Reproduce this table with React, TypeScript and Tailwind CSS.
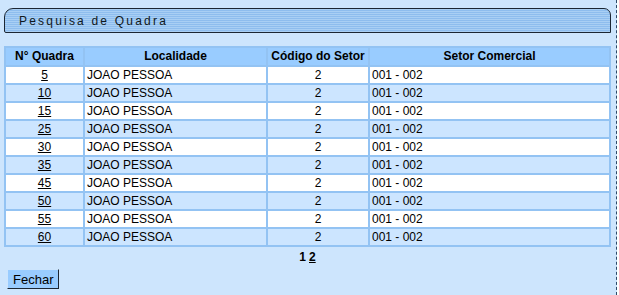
import React from "react";

const rows = ["5", "10", "15", "25", "30", "35", "45", "50", "55", "60"];

export default function App() {
  return (
    <div className="w-[619px] h-[295px] bg-white">
      <div className="w-[617px] h-[295px] bg-[#cde5fd] border-r border-dashed border-r-[#2c4a68] font-['Liberation_Sans',Arial,sans-serif] text-[12px] text-black pt-[8px] pl-[4px]">
        <div className="w-[607px] h-[25px] border border-[#1b2633] rounded-tl-[9px] rounded-tr-[7px] rounded-bl-[2px] bg-[repeating-linear-gradient(to_bottom,#a9cff4_0px,#a9cff4_1px,#8ebdee_1px,#8ebdee_2px)] flex items-center pl-[14px]">
          <span className="tracking-[2.2px] text-[12px] text-[#101820] leading-none">Pesquisa de Quadra</span>
        </div>
        <table className="mt-[13px] w-[607px] border-separate border-spacing-[2px] bg-[#93c3f3] table-fixed leading-[16px]">
          <colgroup>
            <col className="w-[77px]" />
            <col className="w-[181px]" />
            <col className="w-[100px]" />
            <col />
          </colgroup>
          <thead>
            <tr className="bg-[#99ccff] font-bold">
              <th className="text-center font-bold p-0 h-[17px] leading-[17px]">N° Quadra</th>
              <th className="text-center font-bold p-0 leading-[17px]">Localidade</th>
              <th className="text-center font-bold p-0 leading-[17px]">Código do Setor</th>
              <th className="text-center font-bold p-0 leading-[17px]">Setor Comercial</th>
            </tr>
          </thead>
          <tbody>
            {rows.map((r, i) => (
              <tr key={r} className={i % 2 === 0 ? "bg-white" : "bg-[#cce5ff]"}>
                <td className="text-center p-0 h-[16px] leading-[16px]">
                  <span className="underline">{r}</span>
                </td>
                <td className="p-0 pl-[2px] leading-[16px]">JOAO PESSOA</td>
                <td className="text-center p-0 leading-[16px]">2</td>
                <td className="p-0 pl-[2px] leading-[16px]">001 - 002</td>
              </tr>
            ))}
          </tbody>
        </table>
        <div className="w-[607px] flex justify-center mt-[3px] font-bold leading-[14px]">
          <span>1</span>
          <span className="ml-[3px] underline">2</span>
        </div>
        <div className="mt-[5px] pl-[3px]">
          <button className="h-[20px] px-[5px] bg-[#99ccff] border border-[#1b2633] border-l-[#cde5fd] border-t-[#cde5fd] text-[13px] leading-none text-black">
            Fechar
          </button>
        </div>
      </div>
    </div>
  );
}
